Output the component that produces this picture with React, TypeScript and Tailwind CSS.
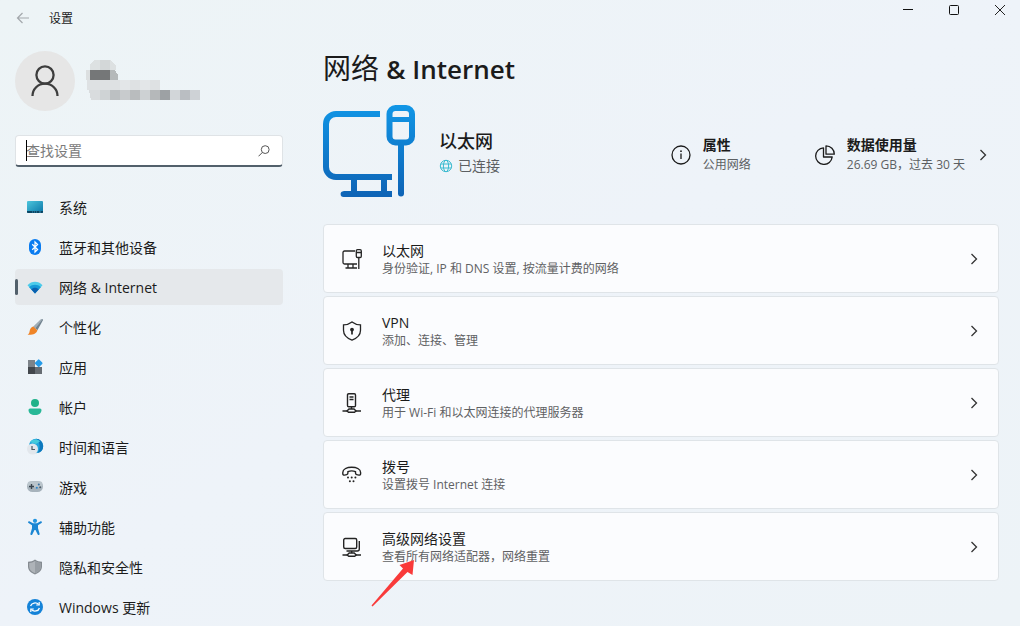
import { useState } from 'react';
import type { ReactNode } from 'react';

const Chevron = () => (
  <svg width="8" height="14" viewBox="0 0 8 14" fill="none" stroke="#333" strokeWidth="1.3" className="shrink-0">
    <path d="M1.5 2 6.500 7l-5 5" />
  </svg>
);

// sidebar icons
const SystemIcon = () => (
  <svg width="18" height="18" viewBox="0 0 18 18">
    <defs>
      <linearGradient id="sys" x1="0" y1="0" x2="1" y2="1">
        <stop offset="0" stopColor="#4cc5dc" />
        <stop offset="1" stopColor="#0a76a8" />
      </linearGradient>
    </defs>
    <rect x="1" y="3" width="16" height="12" rx="1" fill="url(#sys)" />
    <path d="M1 13h16v1a1 1 0 0 1-1 1H2a1 1 0 0 1-1-1z" fill="#0b4563" />
    <path d="M6 14h1M8 14h1M10 14h1M13 14h2" stroke="#4aa8cf" strokeWidth="0.8" />
  </svg>
);

const BluetoothIcon = () => (
  <svg width="18" height="18" viewBox="0 0 18 18" fill="none">
    <rect x="3" y="1" width="12" height="16" rx="6" fill="#0a7cf0" />
    <path d="M6.2 6.2 11.6 11.5 9 14V4l2.6 2.5L6.2 11.8" stroke="#fff" strokeWidth="1.2" />
  </svg>
);

const WifiIcon = () => (
  <svg width="18" height="18" viewBox="0 0 18 18">
    <path d="M1.500 7.200C5.600 2.600 12.400 2.600 16.500 7.200L9 15.400z" fill="#4ccbea" />
    <path d="M3.200 9.200C6.400 6 11.600 6 14.800 9.200L9 15.400z" fill="#169ad8" />
    <path d="M5.200 11.300C7.300 9.200 10.700 9.200 12.800 11.300L9 15.400z" fill="#0b5fae" />
  </svg>
);

const BrushIcon = () => (
  <svg width="18" height="18" viewBox="0 0 18 18">
    <path d="M15.400 1.100c1-.5 1.900.3 1.400 1.300L11.400 12.200 7.400 8.700z" fill="#71828e" />
    <path d="M15.400 1.100c.5-.2.900-.1 1.200.2L9.300 10.400 7.400 8.700z" fill="#a1afb8" />
    <path d="M7.200 8.500 11.400 12.200c-.7 3.400-5 5-9.800 4.500 2-.9 1.700-2.500 2.300-4.600.6-2 1.700-3.300 3.300-3.600z" fill="#ef8427" />
  </svg>
);

const AppsIcon = () => (
  <svg width="18" height="18" viewBox="0 0 18 18">
    <path d="M2 2h7v7H2z" fill="#7d8389" />
    <path d="M2 9h7v7H2z" fill="#43474c" />
    <path d="M9 9h7v7H9z" fill="#666c72" />
    <rect x="9.700" y="2.200" width="6" height="6" rx="1" transform="rotate(45 12.700 5.200)" fill="#259be8" />
  </svg>
);

const AccountIcon = () => (
  <svg width="18" height="18" viewBox="0 0 18 18">
    <circle cx="9" cy="5" r="4" fill="#1fb28a" />
    <path d="M4 10.500h10a1.500 1.500 0 0 1 1.500 1.500c0 3-2.500 5-6.500 5s-6.500-2-6.500-5A1.500 1.500 0 0 1 4 10.500z" fill="#28b897" />
  </svg>
);

const TimeIcon = () => (
  <svg width="18" height="18" viewBox="0 0 18 18" fill="none">
    <circle cx="10" cy="8" r="7.200" fill="#23a6dc" />
    <path d="M10 .8c2.500 2.200 3.600 4.400 3.600 7.400s-.8 4.800-2.200 6.800a7.200 7.200 0 0 0 5.800-7A7.200 7.200 0 0 0 10 .8z" fill="#0d78bd" />
    <path d="M4 4C7 .8 12 1 14 3.500L10 6z" fill="#45cbdc" />
    <circle cx="6.500" cy="11" r="5.500" fill="#e2e7ec" />
    <path d="M6 8v3.500h3" stroke="#4c5862" strokeWidth="1.200" />
  </svg>
);

const GameIcon = () => (
  <svg width="18" height="18" viewBox="0 0 18 18" fill="none">
    <rect x="1" y="3" width="16" height="11" rx="5.500" fill="#a7b3bc" />
    <rect x="1.500" y="3.200" width="15" height="6" rx="3" fill="#bac5cc" />
    <path d="M3 8.500h5M5.500 6v5" stroke="#3a4650" strokeWidth="1.400" />
    <circle cx="12.800" cy="6.500" r="1" fill="#3a6f9f" />
    <circle cx="10.800" cy="9.800" r="1" fill="#2b88cf" />
    <circle cx="14.200" cy="9.200" r="1" fill="#4d5d69" />
  </svg>
);

const AccessIcon = () => (
  <svg width="18" height="18" viewBox="0 0 18 18">
    <circle cx="9" cy="2.800" r="2.100" fill="#2295e0" />
    <path
      d="M3.400 3.300 7 5.200h4l3.600-1.900c1.200-.4 1.900 1 .9 1.700L12 7.300v2.900l1.600 5.600c.2 1.300-1.400 1.700-1.900.6L9.500 12h-1l-2.200 4.400c-.5 1.100-2.100.7-1.900-.6L6 10.200V7.300L2.500 5c-1-.7-.3-2.100.9-1.700z"
      fill="#1b86d3"
    />
  </svg>
);

const ShieldIcon = () => (
  <svg width="18" height="18" viewBox="0 0 18 18">
    <path d="M9 1.500c2 1.500 4.300 2.200 7 2.300v4.700c0 3.800-2.700 6.300-7 8-4.300-1.700-7-4.200-7-8V3.800c2.700-.1 5-.8 7-2.300z" fill="#858b91" />
    <path d="M9 2.900c1.800 1.200 3.700 1.800 5.800 2v3.600c0 3.100-2.200 5.200-5.800 6.700-3.600-1.500-5.800-3.600-5.800-6.700V4.900c2.100-.2 4-.8 5.800-2z" fill="#aeb3b8" />
    <path d="M9 2.900c1.800 1.200 3.700 1.800 5.800 2v3.600c0 3.100-2.200 5.200-5.800 6.700z" fill="#989ea4" />
  </svg>
);

const UpdateIcon = () => (
  <svg width="18" height="18" viewBox="0 0 18 18" fill="none">
    <circle cx="9" cy="9" r="8" fill="#1583d8" />
    <path d="M4.600 8C5.400 4.800 10.300 3.800 12.600 6.500M13.400 10c-.8 3.200-5.700 4.200-8 1.500" stroke="#fff" strokeWidth="1.300" />
    <path d="M13.200 4v3h-3M4.800 14v-3h3" stroke="#fff" strokeWidth="1.200" />
  </svg>
);

// card icons
const EthernetIcon = () => (
  <svg width="20" height="20" viewBox="0 0 20 20" fill="none" stroke="#242424" strokeWidth="1.300">
    <path d="M13 2H2.500A1.500 1.500 0 0 0 1 3.500v10A1.500 1.500 0 0 0 2.500 15H15M6 15v4M11 15v4M3.500 19H15" />
    <rect x="14.300" y="0.700" width="5" height="7.800" rx="1.200" />
    <path d="M14.300 3.500h5M16.800 8.400V20" />
  </svg>
);

const VpnIcon = () => (
  <svg width="20" height="20" viewBox="0 0 20 20" fill="none" stroke="#242424" strokeWidth="1.300">
    <path d="M10 .9c2.500 1.900 5.300 2.800 8.500 3v5.300c0 4.900-3.300 7.900-8.500 9.900-5.200-2-8.500-5-8.500-9.900V3.900c3.200-.2 6-1.100 8.500-3z" />
    <circle cx="10" cy="8.600" r="1.900" fill="#242424" stroke="none" />
    <path d="M10 9v4.400" strokeWidth="1.700" />
  </svg>
);

const ProxyIcon = () => (
  <svg width="20" height="20" viewBox="0 0 20 20" fill="none" stroke="#242424" strokeWidth="1.400">
    <rect x="5.500" y=".7" width="8" height="13" rx="1.200" />
    <path d="M7.500 4h4M7.500 6.500h4M9.500 13.700V16M.5 18h5M13.500 18h5.500" />
    <path d="M7 16h5l2 2-1.500 1.300h-6L5 18z" />
  </svg>
);

const DialIcon = () => (
  <svg width="20" height="20" viewBox="0 0 20 20" fill="none" stroke="#242424" strokeWidth="1.400">
    <path d="M.8 7.500C.8 4 5 2.200 9.700 2.200S18.600 4 18.600 7.500v1.300c0 1-.8 1.500-1.700 1.300l-2.200-.5c-.8-.2-1.200-.7-1.200-1.500V6.700C11.300 5.800 8.100 5.800 5.900 6.700v1.400c0 .8-.4 1.300-1.200 1.500l-2.200.5C1.600 10.300.8 9.800.8 8.800z" />
    <g fill="#242424" stroke="none">
      <circle cx="6" cy="12.500" r="1" />
      <circle cx="9.700" cy="12.500" r="1" />
      <circle cx="13.400" cy="12.500" r="1" />
      <circle cx="7.900" cy="16.300" r="1" />
      <circle cx="11.500" cy="16.300" r="1" />
    </g>
  </svg>
);

const AdvancedIcon = () => (
  <svg width="20" height="20" viewBox="0 0 20 20" fill="none" stroke="#242424" strokeWidth="1.400">
    <rect x="1.700" y="1.500" width="13" height="10" rx="1.500" />
    <path d="M17.300 4v8a2 2 0 0 1-2 2H4.500M9.700 14v2M.5 18h5M14 18h5" />
    <path d="M7.200 16h5l2 2-1.500 1.300h-6L5.200 18z" />
  </svg>
);

const HeroEthernet = () => (
  <svg width="92" height="92" viewBox="0 0 92 92" fill="none" stroke="url(#hero)" strokeWidth="6" className="shrink-0">
    <defs>
      <linearGradient id="hero" x1="0" y1="0" x2="0" y2="92" gradientUnits="userSpaceOnUse">
        <stop offset="0" stopColor="#1196e6" />
        <stop offset="1" stopColor="#0e63b5" />
      </linearGradient>
    </defs>
    <path d="M57 9H13A10 10 0 0 0 3 19v43a10 10 0 0 0 10 10h56M31 74v14M61 74v14" />
    <path d="M69 89.100H20.500" />
    <circle cx="20.500" cy="89.100" r="2.900" fill="url(#hero)" stroke="none" />
    <rect x="66.500" y="3" width="22.500" height="34.500" rx="6" />
    <path d="M67 14.500h22" strokeWidth="5" />
    <path d="M78 38v50.500" strokeLinecap="round" />
  </svg>
);

// blurred account name, 10px blocks
const NameMosaic = () => (
  <svg width="115" height="42" viewBox="0 0 115 42" shapeRendering="crispEdges">
    <path d="M8 0h17l5 6v4H4V4z" fill="#dde1e2" />
    <path d="M14 0h10v10H14z" fill="#d3d7d8" />
    <path d="M0 10h4v10H0z" fill="#dcdfe0" />
    <path d="M4 10h20v10H4z" fill="#757778" />
    <path d="M24 10h5l3 5v5h-8z" fill="#b5b9ba" />
    <path d="M1 20h73v10H1z" fill="#dee1e3" />
    <path d="M34 20h10v10H34zM54 20h10v10H54z" fill="#e3e6e8" />
    <path d="M3 30h11v10H5z" fill="#d9dcde" />
    <path d="M14 30h10v10H14z" fill="#cfd3d5" />
    <path d="M24 30h10v10H24z" fill="#bcc0c2" />
    <path d="M34 30h10v10H34z" fill="#c8cbcd" />
    <path d="M44 30h10v10H44z" fill="#b9bcbe" />
    <path d="M54 30h10v10H54z" fill="#cdd1d3" />
    <path d="M64 30h10v10H64z" fill="#b5b8ba" />
    <path d="M74 30h10v10H74z" fill="#9da1a4" />
    <path d="M84 30h10v10H84z" fill="#d2d6d9" />
    <path d="M94 30h10v10H94z" fill="#babec2" />
    <path d="M104 30h10v10h-10z" fill="#ced2d6" />
  </svg>
);

type NavItem = { label: string; icon: ReactNode };

const navItems: NavItem[] = [
  { label: '系统', icon: <SystemIcon /> },
  { label: '蓝牙和其他设备', icon: <BluetoothIcon /> },
  { label: '网络 & Internet', icon: <WifiIcon /> },
  { label: '个性化', icon: <BrushIcon /> },
  { label: '应用', icon: <AppsIcon /> },
  { label: '帐户', icon: <AccountIcon /> },
  { label: '时间和语言', icon: <TimeIcon /> },
  { label: '游戏', icon: <GameIcon /> },
  { label: '辅助功能', icon: <AccessIcon /> },
  { label: '隐私和安全性', icon: <ShieldIcon /> },
  { label: 'Windows 更新', icon: <UpdateIcon /> },
];

const cards = [
  { title: '以太网', desc: '身份验证, IP 和 DNS 设置, 按流量计费的网络', icon: <EthernetIcon /> },
  { title: 'VPN', desc: '添加、连接、管理', icon: <VpnIcon /> },
  { title: '代理', desc: '用于 Wi-Fi 和以太网连接的代理服务器', icon: <ProxyIcon /> },
  { title: '拨号', desc: '设置拨号 Internet 连接', icon: <DialIcon /> },
  { title: '高级网络设置', desc: '查看所有网络适配器，网络重置', icon: <AdvancedIcon />, pointed: true },
];

const TitleBar = () => (
  <header className="flex h-9 items-center pl-4">
    <button type="button" aria-label="返回" className="mr-[18px]">
      <svg width="15" height="14" viewBox="0 0 15 14" fill="none" stroke="#a3a8ac" strokeWidth="1.200">
        <path d="M13 7H1.500M6.500 2 1.500 7l5 5" />
      </svg>
    </button>
    <span className="pt-0.5 text-xs text-[#1b1b1b]">设置</span>
    <div className="ml-auto flex gap-[6px] self-start">
      <button type="button" aria-label="最小化" className="flex h-5 w-10 items-center justify-center">
        <svg width="10" height="10" viewBox="0 0 10 10" stroke="#111"><path d="M0 4.500h10" /></svg>
      </button>
      <button type="button" aria-label="最大化" className="flex h-5 w-10 items-center justify-center">
        <svg width="10" height="10" viewBox="0 0 10 10" fill="none" stroke="#111"><rect x=".5" y=".5" width="9" height="9" rx="1" /></svg>
      </button>
      <button type="button" aria-label="关闭" className="flex h-5 w-10 items-center justify-center">
        <svg width="10" height="10" viewBox="0 0 10 10" stroke="#222"><path d="M0 0l10 10M10 0 0 10" /></svg>
      </button>
    </div>
  </header>
);

const App = () => {
  const [active, setActive] = useState('网络 & Internet');
  const [query, setQuery] = useState('');

  return (
    <div className="min-h-screen bg-linear-to-br from-[#edf4f6] via-[#eef3f9] to-[#edf3f7] font-['Open_Sans','Noto_Sans_CJK_SC',sans-serif] text-[#1b1b1b]">
      <TitleBar />
      <div className="flex gap-10 pr-[21px] pl-[15px]">
        <aside className="w-[268px] shrink-0 pt-[15px]">
          <div className="flex items-center gap-[11px]">
            <div className="flex size-[60px] items-center justify-center rounded-full bg-[#e6e6e6]">
              <svg width="28" height="32" viewBox="0 0 28 32" fill="none" stroke="#3d3d3d" strokeWidth="2.300">
                <circle cx="14" cy="10" r="8.600" />
                <path d="M1.500 31c0-7 5.500-12.300 12.500-12.300S26.500 24 26.500 31" />
              </svg>
            </div>
            <NameMosaic />
          </div>

          <div className="relative mt-6 flex h-8 items-center overflow-hidden rounded border border-b-2 border-[#dfe3e6] border-b-[#52606b] bg-white pr-3 pl-[10px]">
            <input
              type="text"
              aria-label="查找设置"
              placeholder="查找设置"
              value={query}
              onChange={(e) => setQuery(e.target.value)}
              className="w-full min-w-0 bg-transparent text-sm outline-none placeholder:text-[#7b7b7b]"
            />
            <span className="absolute top-1 bottom-1 left-[10px] w-px bg-black" />
            <svg width="12" height="12" viewBox="0 0 12 12" fill="none" stroke="#555" className="shrink-0">
              <circle cx="7.200" cy="4.600" r="3.900" />
              <path d="M4.400 7.400.5 11.300" />
            </svg>
          </div>

          <nav className="mt-[22px] flex flex-col gap-1">
            {navItems.map((item) => (
              <button
                key={item.label}
                type="button"
                onClick={() => setActive(item.label)}
                className={`relative flex h-9 items-center gap-[15px] rounded pl-[11px] text-sm ${active === item.label ? 'bg-[#e5e8eb]' : ''}`}
              >
                {active === item.label && <span className="absolute left-0 h-4 w-[3px] rounded-full bg-[#52606b]" />}
                {item.icon}
                <span className="pt-0.5">{item.label}</span>
              </button>
            ))}
          </nav>
        </aside>

        <main className="min-w-0 flex-1 pt-3.5">
          <h1 className="text-[28px] leading-9">
            网络 <span className="text-[26px] font-semibold">&amp; Internet</span>
          </h1>

          <section className="mt-[18px] flex items-center pr-3">
            <HeroEthernet />
            <div className="ml-6 pt-1">
              <h2 className="text-lg leading-[26px] font-medium">以太网</h2>
              <p className="flex items-center gap-[5px] text-sm leading-6 text-[#5c5f62]">
                <svg width="14" height="14" viewBox="0 0 14 14" fill="none" stroke="#3bbbd0">
                  <circle cx="7" cy="7" r="5.700" />
                  <ellipse cx="7" cy="7" rx="2.600" ry="5.700" />
                  <path d="M1.800 5h10.400M1.800 9h10.400" />
                </svg>
                已连接
              </p>
            </div>

            <button type="button" className="ml-auto flex items-center gap-3 pt-2 text-left">
              <svg width="20" height="20" viewBox="0 0 20 20" fill="none" stroke="#1b1b1b" strokeWidth="1.300">
                <circle cx="10" cy="10" r="9" />
                <path d="M10 8.500V14" />
                <circle cx="10" cy="6.200" r="0.900" fill="#1b1b1b" stroke="none" />
              </svg>
              <span className="flex flex-col">
                <span className="text-sm leading-5 font-semibold">属性</span>
                <span className="text-xs leading-5 text-[#5c5f62]">公用网络</span>
              </span>
            </button>
            <button type="button" className="ml-16 flex items-center gap-3 pt-2 text-left">
              <svg width="20" height="20" viewBox="0 0 20 20" fill="none" stroke="#1b1b1b" strokeWidth="1.300" strokeLinejoin="round">
                <path d="M8.500 2.800A8.300 8.300 0 1 0 17.200 12H8.500z" />
                <path d="M11 .8v8.400h8.300A8.300 8.300 0 0 0 11 .8z" />
              </svg>
              <span className="flex flex-col">
                <span className="text-sm leading-5 font-semibold">数据使用量</span>
                <span className="text-xs leading-5 text-[#5c5f62]">26.69 GB，过去 30 天</span>
              </span>
              <span className="ml-0.5"><Chevron /></span>
            </button>
          </section>

          <div className="mt-[27px] flex flex-col gap-[3px]">
            {cards.map((card) => (
              <button
                key={card.title}
                type="button"
                className="relative flex h-[69px] items-center rounded border border-[#dfe4e8] bg-[#fbfcfe] pr-5 pl-[18px] text-left"
              >
                {card.icon}
                <span className="ml-5 flex flex-1 flex-col pt-0.5">
                  <span className="text-sm leading-[18px]">{card.title}</span>
                  <span className="text-xs leading-[18px] text-[#5f6163]">{card.desc}</span>
                </span>
                <Chevron />
                {card.pointed && (
                  <svg width="44" height="48" viewBox="0 0 44 48" className="absolute top-[46px] left-[47px]">
                    <path d="M43 1 28.500 6l3.500 3.500L.5 46.500l1 1L36.500 13l5 3z" fill="#f93a3a" />
                  </svg>
                )}
              </button>
            ))}
          </div>
        </main>
      </div>
    </div>
  );
};

export default App;
